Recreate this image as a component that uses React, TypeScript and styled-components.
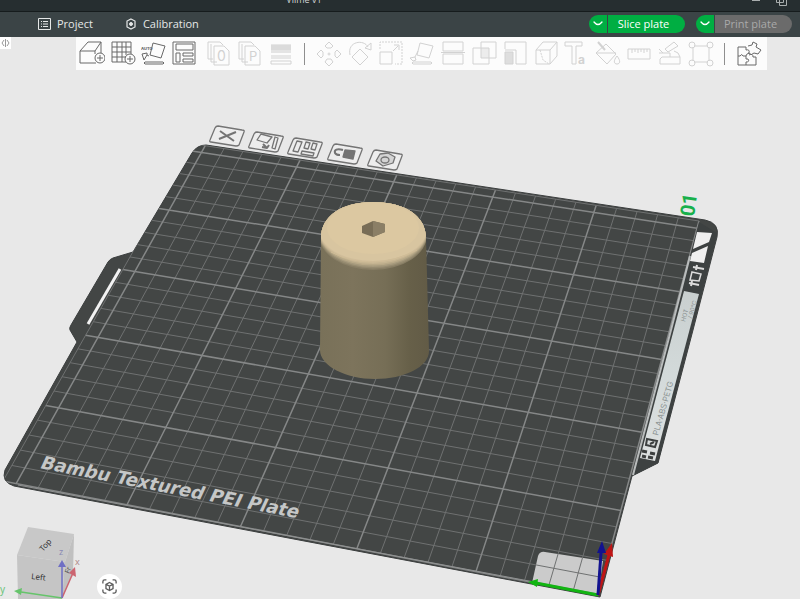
import React from "react";
import styled, { createGlobalStyle, css } from "styled-components";

const GlobalStyle = createGlobalStyle`
  *, *::before, *::after { box-sizing: border-box; }
  body { margin: 0; background: #e8e8e8; }
  button { font: inherit; color: inherit; border: 0; padding: 0; background: none; cursor: pointer; }
`;

const Page = styled.div`
  display: flex;
  flex-direction: column;
  height: 100vh;
  overflow: hidden;
  font-family: "Open Sans", "Noto Sans", sans-serif;
  font-size: 11px;
`;

const TitleBar = styled.header`
  display: grid;
  grid-template-columns: 1fr auto 3fr;
  align-items: center;
  flex: none;
  height: 24px;
  margin-top: -12px;
  background: #262e30;
  border-bottom: 1px solid #161c1d;
`;

const ProjectName = styled.h1`
  grid-column: 1 / 4;
  grid-row: 1;
  width: 76%;
  margin: 0;
  text-align: center;
  font-size: 9px;
  font-weight: 400;
  line-height: 14px;
  color: #d0d3d3;
`;

const WindowControls = styled.div`
  grid-column: 3;
  grid-row: 1;
  display: flex;
  align-items: center;
  justify-content: flex-end;
  gap: 14px;
  padding-right: 12px;
  color: #a9aeae;
  svg { display: block; }
`;

const NavBar = styled.nav`
  display: flex;
  align-items: center;
  flex: none;
  height: 25px;
  padding: 0 8px 2px 38px;
  gap: 32px;
  background: #3b4446;
  color: #e6e8e8;
`;

const NavTab = styled.button`
  display: flex;
  align-items: center;
  gap: 6px;
  line-height: 16px;
  svg { display: block; }
`;

const Actions = styled.div`
  display: flex;
  gap: 11px;
  margin-left: auto;
`;

const SplitButton = styled.div`
  display: flex;
  gap: 1px;
  height: 18px;
  border-radius: 9px;
  overflow: hidden;
`;

const MenuPart = styled.button`
  display: grid;
  place-items: center;
  width: 18px;
  background: #00ae42;
  color: #fff;
`;

const MainPart = styled.button<{ $off?: boolean }>`
  width: 77px;
  padding-right: 6px;
  line-height: 18px;
  background: ${(p) => (p.$off ? "#6b6b6b" : "#00ae42")};
  color: ${(p) => (p.$off ? "#a9a9a9" : "#fff")};
`;

const Viewport = styled.main`
  position: relative;
  flex: 1;
  min-height: 0;
  display: flex;
  align-items: flex-start;
  justify-content: space-between;
  padding-right: 33px;
  background: #e8e8e8;
`;

const Scene = styled.svg`
  position: absolute;
  inset: 0;
  width: 100%;
  height: 100%;
`;

const Handle = styled.button`
  z-index: 1;
  display: grid;
  place-items: center;
  width: 11px;
  height: 12px;
  background: #fff;
  color: #999;
`;

const Toolbar = styled.div`
  z-index: 1;
  display: flex;
  align-items: center;
  height: 33px;
  padding-right: 3px;
  background: #fcfcfc;
`;

const Group = styled.div`
  display: flex;
  & + & { margin-left: 3px; }
`;

const Divider = styled.span`
  width: 1px;
  height: 22px;
  margin: 0 8px;
  background: #8f8f8f;
`;

const Tool = styled.button<{ $off?: boolean }>`
  display: grid;
  place-items: center;
  width: 31px;
  height: 33px;
  color: ${(p) => (p.$off ? "#d2d2d2" : "#686868")};
  ${(p) => p.$off && css`cursor: default;`}
`;

const Icon = styled.svg`
  width: 26px;
  height: 26px;
  fill: none;
  stroke: currentColor;
  stroke-width: 1;
  stroke-linejoin: round;
  text { fill: currentColor; stroke: none; font-family: Inter, sans-serif; }
`;

const Navigator = styled.div`
  position: absolute;
  left: 0;
  bottom: 0;
  display: flex;
  align-items: flex-end;
  gap: 13px;
`;

const RoundButton = styled.button`
  display: grid;
  place-items: center;
  width: 25px;
  height: 25px;
  border-radius: 50%;
  background: #fff;
  color: #5c5c5c;
`;

const PlateButton = styled.button`
  display: block;
  width: 38px;
  height: 24px;
  color: #747474;
  svg { display: block; }
`;

type Pt = [number, number];

/* Maps bed coordinates in millimetres to scene coordinates. */
const BED = 256;
const corners: Pt[] = [[598, 595], [699, 221], [194, 144], [3, 481]];

function makeProjection([p0, p1, p2, p3]: Pt[]) {
  const dx1 = p1[0] - p2[0], dy1 = p1[1] - p2[1];
  const dx2 = p3[0] - p2[0], dy2 = p3[1] - p2[1];
  const sx = p0[0] - p1[0] + p2[0] - p3[0];
  const sy = p0[1] - p1[1] + p2[1] - p3[1];
  const det = dx1 * dy2 - dx2 * dy1;
  const g = (sx * dy2 - dx2 * sy) / det;
  const h = (dx1 * sy - sx * dy1) / det;
  return (x: number, y: number): Pt => {
    const u = x / BED, v = y / BED, w = g * u + h * v + 1;
    return [
      ((p1[0] - p0[0] + g * p1[0]) * u + (p3[0] - p0[0] + h * p3[0]) * v + p0[0]) / w,
      ((p1[1] - p0[1] + g * p1[1]) * u + (p3[1] - p0[1] + h * p3[1]) * v + p0[1]) / w,
    ];
  };
}

const project = makeProjection(corners);
const segment = (a: Pt, b: Pt) => `M${a[0]} ${a[1]}L${b[0]} ${b[1]}`;
const steps = Array.from({ length: 26 }, (_, i) => i * 10);
const gridPath = (bold: boolean) =>
  steps
    .filter((s) => (s % 50 === 0) === bold)
    .map((s) => segment(project(s, 0), project(s, BED)) + segment(project(0, s), project(BED, s)))
    .join("");

const plateOutline =
  "M206 145L705 220Q720 223 717 237L693 330L658 463L632 476L600 597L14 486Q1 482 5 470L77 342L70 330Q69 328 71 325L108 262Q110 259 113 258L133 252L192 153Q197 145 206 145Z";

const modelOutline =
  "M321 238C321 216 342 202 373 202C405 202 426 216 426 238L429 351C429 367 404 379 375 379C346 379 320 366 320 350Z";

const fillet = ["#887e65", "#968b70", "#a69a7d", "#b8a988", "#c6b592", "#d1be9b", "#d8c5a0"];

const plateTools: { name: string; at: Pt; art: React.ReactNode }[] = [
  { name: "Remove all objects", at: [227, 136], art: <path d="M12 7L26 17M28 8L11 15" strokeWidth="2" /> },
  {
    name: "Auto orient",
    at: [266, 142],
    art: <><path d="M14 4L25 7L20 13L10 10ZM28 7L31 8L28 19L25 18Z" /><path d="M16 14L20 18M22 15L20 18L15 17" strokeWidth="2" /></>,
  },
  { name: "Arrange objects", at: [305, 148], art: <path d="M11 5L16 6L12 16L7 15ZM20 6L24 7L22 13L18 12ZM27 7L31 8L29 14L25 13ZM16 15L28 17L27 20L15 18Z" /> },
  {
    name: "Lock plate",
    at: [345, 154],
    art: <><path d="M19 8L29 9L27 17L17 15Z" fill="currentColor" /><path d="M17 8C11 6 8 8 9 11Q10 13 14 13" strokeWidth="2" /></>,
  },
  {
    name: "Plate settings",
    at: [385, 160],
    art: <><path d="M14 6L22 5L29 9L27 15L17 18L10 13Z" fill="#d4d4d4" /><ellipse cx="19" cy="12" rx="4" ry="3" /></>,
  },
];

function PlateScene() {
  return (
    <Scene viewBox="0 37 800 562" preserveAspectRatio="xMidYMid slice" role="img" aria-label="Build plate with one model">
      <defs>
        <linearGradient id="body" x1="0" x2="1">
          <stop offset="0" stopColor="#797159" />
          <stop offset="0.3" stopColor="#7d745c" />
          <stop offset="0.6" stopColor="#766e56" />
          <stop offset="0.82" stopColor="#676049" />
          <stop offset="1" stopColor="#625b46" />
        </linearGradient>
        <linearGradient id="tape" x1="0" y1="0" x2="0" y2="1">
          <stop offset="0" stopColor="#c9cfcf" />
          <stop offset="0.5" stopColor="#d3dada" />
          <stop offset="1" stopColor="#dde0e0" />
        </linearGradient>
        <clipPath id="plateClip"><path d={plateOutline} /></clipPath>
        <clipPath id="modelClip"><path d={modelOutline} /></clipPath>
      </defs>

      <path d={plateOutline} fill="#434645" stroke="#3b3e3e" />
      <path d="M120 269L88 324" stroke="#f2f2f2" strokeWidth="3" />

      <path d="M532 583L538 556Q540 551 545 552L603 561L598 595Z" fill="#cbcbcb" />
      <g clipPath="url(#plateClip)" fill="none">
        <path d={gridPath(false)} stroke="#6f7171" strokeWidth="1" />
        <path d={gridPath(true)} stroke="#858787" strokeWidth="1.500" />
        <path d={segment(project(0, BED), project(BED, BED)) + segment(project(BED, BED), project(BED, 0))} stroke="#6f7171" />
      </g>
      <path d="M598 594L18 485" stroke="#8f9191" strokeWidth="1" />

      <path d="M699 222L717 233L692 330L658 463L632 476L670 332Z" fill="#3d4141" />
      <path d="M690 256L671 330L633 475" stroke="#b9bcbc" strokeWidth="2" fill="none" />
      <path d="M697 232L712 233L709 242L693 249ZM708 246L704 263L690 261L692 253Z" fill="#efefef" />
      <g stroke="#dcdcdc" fill="none">
        <path d="M692 272L701 274L699 281L690 280Z" strokeWidth="1.500" />
        <path d="M693 267L704 269M689 283L699 285" strokeWidth="2" />
        <path d="M697 265L696 270M692 281L691 286" strokeWidth="2" />
      </g>
      <path d="M684 291L699 294L655 461L640 458Z" fill="url(#tape)" />
      <g stroke="#3c3f3f" fill="none" strokeWidth="2">
        <path d="M647 439L657 441L655 447L646 445ZM650 444L654 442" />
        <path d="M642 451L647 452M650 453L655 454M642 456L646 457M648 457L653 458" strokeWidth="3" />
      </g>
      <g fill="#8b9392" fontFamily="Inter, sans-serif" fontSize="8">
        <text transform="translate(658 436) rotate(-74)">PLA·ABS·PETG</text>
        <text transform="translate(692 319) rotate(-75)" fontSize="6">/ 90°C</text>
        <text transform="translate(685 322) rotate(-75)" fontSize="6">HOT</text>
      </g>

      <text
        transform="translate(39 468) rotate(11) skewX(-14)"
        fill="#c5c7c7"
        fontFamily="DejaVu Sans, sans-serif" fontWeight="700" fontSize="18"
      >
        Bambu Textured PEI Plate
      </text>
      <text transform="translate(694 217) rotate(-82)" fill="#18b04b" fontFamily="Roboto, sans-serif" fontWeight="700" fontSize="20">
        01
      </text>

      <path d={modelOutline} fill="url(#body)" />
      <g clipPath="url(#modelClip)">
        {fillet.map((color, i) => (
          <ellipse key={color} cx="373" cy={235 - i} rx={54} ry={35 - i * 0.5} fill={color} />
        ))}
        <ellipse cx="373" cy="228" rx="46" ry="26" fill="#dcc8a1" />
        <path d="M331 252Q372 273 417 250" stroke="#cfbc97" fill="none" />
      </g>
      <path d="M362 226L373 221L385 224L385 232L373 237L362 233Z" fill="#786d56" />
      <path d="M373 221L385 224L385 232L373 237Z" fill="#8b7f66" />

      <g strokeWidth="3">
        <path d="M598 595L536 583" stroke="#12b512" />
        <path d="M528 582L538 579L537 587Z" fill="#12b512" />
        <path d="M598 595L609 555" stroke="#bf1515" />
        <path d="M612 543L604 554L613 557Z" fill="#bf1515" />
        <path d="M598 595L601 553" stroke="#12128f" />
        <path d="M602 541L597 553L606 553Z" fill="#12128f" />
      </g>

      {plateTools.map(({ name, at, art }) => (
        <foreignObject key={name} x={at[0] - 19} y={at[1] - 12} width="38" height="24">
          <PlateButton aria-label={name}>
            <svg width="38" height="24" fill="none" stroke="currentColor" strokeWidth="1.300" strokeLinejoin="round">
              <path d="M10 2L34 6Q37 6 36 8L31 21Q30 22 28 22L3 18Q1 18 2 16L7 4Q8 2 10 2Z" fill="#ededed" />
              {art}
            </svg>
          </PlateButton>
        </foreignObject>
      ))}
    </Scene>
  );
}

const pages = <path d="M7 18H2V1H14L17 4M11 21H5V3M8 5H18L23 10V24H8Z" />;

type ToolSpec = { name: string; art: React.ReactNode };

const createTools: ToolSpec[] = [
  { name: "Add model", art: <><path d="M17 22H1V10H16V13M1 10L9 1H22V12M16 10L22 1" /><circle cx="21" cy="17" r="5" /><path d="M21 14V20M18 17H24" /></> },
  { name: "Add plate", art: <><path d="M16 21H2V1H21V13M2 6H21M2 11H21M2 16H16M7 1V21M12 1V21M16 1V14" /><circle cx="20" cy="18" r="5" /><path d="M20 15V21M17 18H23" /></> },
  { name: "Auto orient", art: <><path d="M12 2L24 5L20 17L9 14ZM4 21H22Q24 22 22 23H4Q2 22 4 21ZM1 13L6 12L6 14L3 19ZM6 14L8 15" /><text x="0" y="9" fontSize="4" fontWeight="800">AUTO</text></> },
  { name: "Arrange", art: <path d="M1 1H23V23H1ZM4 3H21V9H4ZM4 12H8V21H4ZM11 12H21V15H11ZM11 18H21V21H11Z" /> },
];

const copyTools: ToolSpec[] = [
  { name: "Split to objects", art: <>{pages}<text x="11" y="20" fontSize="14">0</text></> },
  { name: "Split to parts", art: <>{pages}<text x="12" y="20" fontSize="13">P</text></> },
  { name: "Variable layer height", art: <><path d="M3 4H23V12H3Z" fill="#e4e4e4" stroke="none" /><path d="M3 4H23M3 15H23M3 17H23M3 20H23V23H3ZM3 6H23M3 8H23" /></> },
];

const editTools: ToolSpec[] = [
  { name: "Move", art: <><circle cx="13" cy="13" r="1" /><path d="M13 1L17 5L15 7H11L9 5ZM13 25L17 21L15 18H11L9 21ZM1 13L5 9L7 11V15L5 17ZM25 13L21 9L19 11V15L21 17Z" /></> },
  { name: "Rotate", art: <path d="M13 8L21 16L13 24L5 16ZM3 14C0 0 17 -2 21 6M18 7L24 9V2Z" /> },
  { name: "Scale", art: <><path d="M2 11H14V23H2Z" /><path d="M2 8V1H24V23H17" strokeDasharray="2 1" /><path d="M15 10L20 5M16 4H21V9" /></> },
  { name: "Lay on face", art: <path d="M11 2L24 5L20 17L8 14ZM4 21H22Q24 22 22 23H4Q2 22 4 21ZM1 17L6 16L7 19L4 20ZM6 16L9 10" /> },
  { name: "Cut", art: <path d="M3 1H23V10H3ZM3 13H23V23H3ZM1 11.500H25" /> },
  { name: "Mesh boolean", art: <><path d="M10 7H18V17H10Z" fill="#ececec" stroke="none" /><path d="M10 1H25V17H10ZM2 7H18V23H2Z" /></> },
  { name: "Support painting", art: <><path d="M3 11H11V23H3Z" fill="#dedede" /><path d="M3 8V1H24V23H14V9H3" /></> },
  { name: "Seam painting", art: <><path d="M3 9H17V23H3ZM3 9L10 1H24V15L17 23M17 9L24 1" /><path d="M7 9L10 19L16 23" strokeDasharray="2 1" /></> },
  { name: "Text shape", art: <><path d="M1 1H18V5H12V23H8V5H1Z" /><text x="14" y="23" fontSize="12" fontWeight="700">a</text></> },
  { name: "Color painting", art: <><path d="M11 3L21 13L12 23L1 12ZM1 12H21" /><path d="M3 1L10 9" strokeWidth="2" /><path d="M22 15C18 20 19 23 22 23S26 20 22 15Z" /></> },
  { name: "Measure", art: <path d="M2 8H24V18H2ZM6 8V12M9 8V11M12 8V12M15 8V11M18 8V12M21 8V11" /> },
  { name: "Assembly tool", art: <path d="M5 16H23V23H3V18ZM2 12H13V16M2 8L6 12M8 8L17 1L21 5L11 11ZM17 10L21 12L23 16" /> },
  { name: "Simplify", art: <><path d="M6 5H20M6 21H20M5 6V20M21 6V20" /><circle cx="4" cy="4" r="3" /><circle cx="22" cy="4" r="3" /><circle cx="4" cy="22" r="3" /><circle cx="22" cy="22" r="3" /></> },
];

const assemblyTool: ToolSpec = {
  name: "Assembly view",
  art: <path d="M2 6H10V9Q14 8 13 12Q10 13 10 15H7Q6 12 4 15H2V6M2 15V24H20V16H17Q17 12 13 14M10 24V21Q14 21 12 18H10V15M12 5L16 4L17 1L21 3L20 6L25 9L22 13L18 12Q16 15 12 12" />,
};

function ToolButton({ tool, off }: { tool: ToolSpec; off?: boolean }) {
  return (
    <Tool $off={off} disabled={off} aria-label={tool.name}>
      <Icon viewBox="0 0 26 26">{tool.art}</Icon>
    </Tool>
  );
}

const Chevron = () => (
  <svg width="10" height="6" fill="none" stroke="currentColor" strokeWidth="1.300" strokeLinecap="round">
    <path d="M1 1Q5 6 9 1" />
  </svg>
);

function ViewCube() {
  return (
    <svg width="84" height="76" viewBox="0 523 84 76" role="img" aria-label="View orientation">
      <path d="M28 527L74 534L65 562L17 555Z" fill="#c8c8c8" />
      <path d="M17 555L65 562L62 599H18Z" fill="#c5c5c5" />
      <path d="M74 534L73 573L62 599L65 562Z" fill="#c0c0c0" />
      <g fontFamily="Noto Sans, sans-serif">
        <text transform="translate(31 579) rotate(6)" fontSize="8" fill="#333">Left</text>
        <text transform="translate(43 552) rotate(-48)" fontSize="8" fill="#333">Top</text>
        <text transform="translate(69 574) rotate(-68)" fontSize="7" fill="#555">Fr</text>
        <text x="59" y="555" fontSize="9" fill="#8a8ab4">z</text>
        <text x="75" y="565" fontSize="9" fill="#b08a8a">x</text>
        <text x="0" y="593" fontSize="10" fill="#6cc47c">y</text>
      </g>
      <g strokeWidth="1.500">
        <path d="M62 598L21 592" stroke="#66c46b" />
        <path d="M14 591L22 588L21 595Z" fill="#66c46b" />
        <path d="M62 598L73 573" stroke="#cc6470" />
        <path d="M75 567L69 573L76 577Z" fill="#cc6470" />
        <path d="M62 598V566" stroke="#6f6fc4" />
        <path d="M62 560L58 567H66Z" fill="#6f6fc4" />
      </g>
    </svg>
  );
}

export default function App() {
  return (
    <Page>
      <GlobalStyle />
      <TitleBar>
        <ProjectName>Vilme v1</ProjectName>
        <WindowControls>
          <svg width="10" height="14" stroke="currentColor"><path d="M1 7.500H9" /></svg>
          <svg width="13" height="20" fill="none" stroke="currentColor"><path d="M1.500 5.500H8.500V12.500H1.500ZM4.500 8.500H11.500V15.500H4.500Z" /></svg>
        </WindowControls>
      </TitleBar>
      <NavBar>
        <NavTab>
          <svg width="13" height="12" fill="none" stroke="currentColor"><path d="M0.500 0.500H12.500V11.500H0.500ZM3 3.500H4M5 3.500H10M3 6H4M5 6H10M3 8.500H4M5 8.500H10" /></svg>
          Project
        </NavTab>
        <NavTab>
          <svg width="12" height="12" viewBox="0 0 12 12" fill="none" stroke="currentColor"><path d="M6 1L10 3V9L6 11L2 9V3Z" strokeWidth="1.200" /><circle cx="6" cy="6" r="1.500" fill="currentColor" /></svg>
          Calibration
        </NavTab>
        <Actions>
          <SplitButton>
            <MenuPart aria-label="Slice options"><Chevron /></MenuPart>
            <MainPart>Slice plate</MainPart>
          </SplitButton>
          <SplitButton>
            <MenuPart aria-label="Print options"><Chevron /></MenuPart>
            <MainPart $off disabled>Print plate</MainPart>
          </SplitButton>
        </Actions>
      </NavBar>
      <Viewport>
        <PlateScene />
        <Handle aria-label="Toggle side panel">
          <svg width="9" height="8" fill="none" stroke="currentColor"><path d="M3 1L1 4L3 7M4.500 0V8M6 1L8 4L6 7" /></svg>
        </Handle>
        <Toolbar role="toolbar" aria-label="Model tools">
          <Group>{createTools.map((t) => <ToolButton key={t.name} tool={t} />)}</Group>
          <Group>{copyTools.map((t) => <ToolButton key={t.name} tool={t} off />)}</Group>
          <Divider />
          <Group>{editTools.map((t) => <ToolButton key={t.name} tool={t} off />)}</Group>
          <Divider />
          <ToolButton tool={assemblyTool} />
        </Toolbar>
        <Navigator>
          <ViewCube />
          <RoundButton aria-label="Fit to view">
            <svg width="15" height="15" viewBox="0 0 17 17" fill="none" stroke="currentColor" strokeWidth="1.500">
              <path d="M1 5V3Q1 1 3 1H5M12 1H14Q16 1 16 3V5M16 12V14Q16 16 14 16H12M5 16H3Q1 16 1 14V12" />
              <path d="M8.500 4L12.500 6V11L8.500 13L4.500 11V6ZM4.500 6L8.500 8L12.500 6M8.500 8V13" />
            </svg>
          </RoundButton>
        </Navigator>
      </Viewport>
    </Page>
  );
}
